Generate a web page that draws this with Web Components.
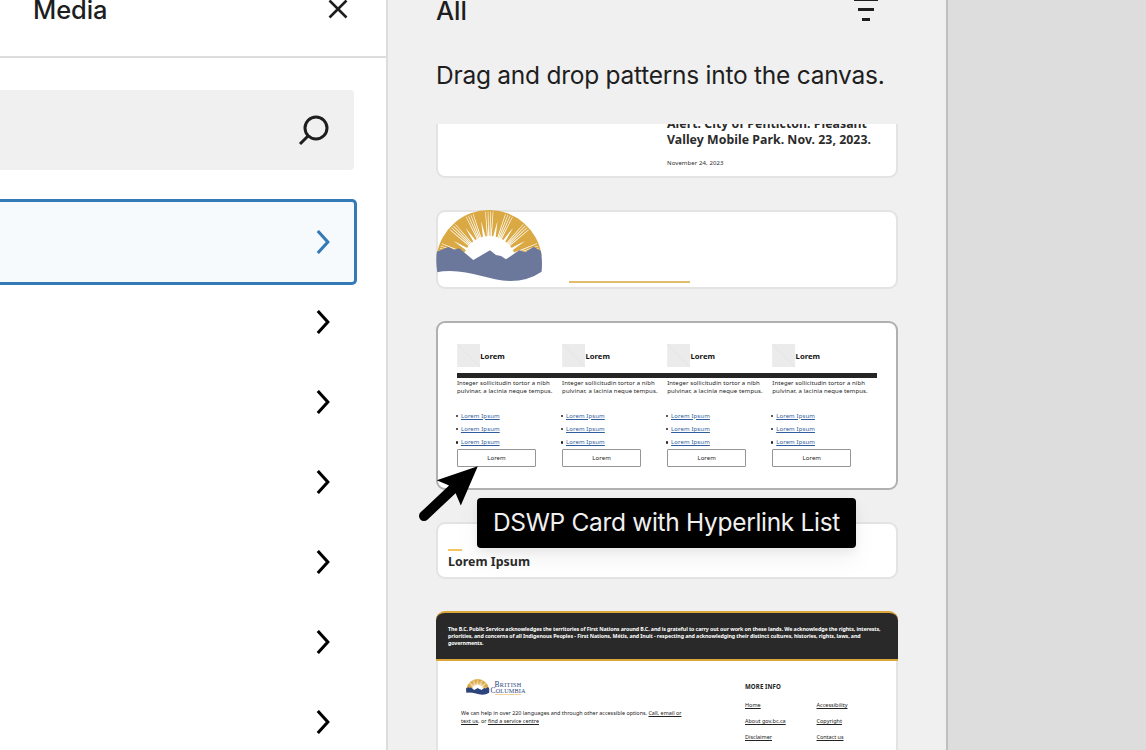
<!DOCTYPE html>
<html lang="en">
<head>
<meta charset="utf-8">
<title>Pattern inserter</title>
<style>
html, body { margin: 0; height: 100%; overflow: hidden; background: #fff; }
body { font-family: Inter, "Liberation Sans", sans-serif; color: #1e1e1e; }
</style>
</head>
<body>
<pattern-inserter></pattern-inserter>
<script>
const define = (name, html, setup) => {
  const template = document.createElement('template');
  template.innerHTML = html;
  customElements.define(name, class extends HTMLElement {
    connectedCallback() {
      if (this.shadowRoot) return;
      this.attachShadow({ mode: 'open' }).append(template.content.cloneNode(true));
      if (setup) setup(this, this.shadowRoot);
    }
  });
};

/* One line of text, tracked so that it fills the width "w". */
define('fit-line', `<style>
:host { display: block; white-space: nowrap; }
span { display: inline-block; vertical-align: top; }
</style><span><slot></slot></span>`, (host, root) => {
  const span = root.querySelector('span');
  const natural = span.getBoundingClientRect().width;
  const n = host.textContent.length;
  if (natural && n > 1) host.style.letterSpacing = ((+host.getAttribute('w') - natural) / n).toFixed(4) + 'px';
});

/* Sun over mountains emblem. */
define('sun-emblem', `<style>
:host { display: block; }
svg { display: block; width: 100%; height: 100%; overflow: visible; }
.hill { fill: var(--hill, #6b789b); }
</style>
<svg viewBox="0 0 107 72">
<path d="M.7 45.400A53 53 0 0 1 105.600 45.400L97 60H8Z" fill="#dba944"/>
<g class="rays" fill="#fff"></g>
<path d="M26.300 53A27 27 0 0 1 80.300 53Z" fill="#fff"/>
<path class="hill" d="M.9 41.700 12.300 37 18 39.700 23.300 38.300 37.300 50 54 40.300 60 45 65 46 70 49.300 83.300 40.300 89.300 42.300 97.700 36.700 104.900 41Q106.600 51 105.600 61.700 92 71 74 71C54 70.500 36 61 14 61Q6 61 1.300 62.300-.5 51 .9 41.700Z"/>
</svg>`, (host, root) => {
  const pt = (a, r) => {
    const t = a * Math.PI / 180;
    return (53.3 + r * Math.cos(t)).toFixed(2) + ' ' + (53 - r * Math.sin(t)).toFixed(2);
  };
  let d = '';
  const wedge = (a, half, r0, r1, tip) => {
    d += `M${pt(a - half, r0)}L${pt(a - tip, r1)}L${pt(a + tip, r1)}L${pt(a + half, r0)}Z`;
  };
  for (const a of [18, 44.5, 67.5, 90, 112.5, 135.5, 162])
    for (const o of [-4.2, -1.4, 1.4, 4.2]) wedge(a + o, 1.1, 26, 51.5, .3);
  for (const a of [31.5, 56, 79, 101, 124, 148.5]) wedge(a, 3, 26, 42, .1);
  const p = document.createElementNS('http://www.w3.org/2000/svg', 'path');
  p.setAttribute('d', d);
  root.querySelector('.rays').append(p);
});

define('category-row', `<style>
:host { display: flex; flex: none; box-sizing: border-box; height: 80px; align-items: center; justify-content: flex-end; padding-right: 56px; color: #000; }
:host([selected]) { height: 86px; margin-right: 29px; padding-right: 24px; border: 3px solid #347ab7; border-left: 0; border-radius: 0 5px 5px 0; background: #f6fafd; color: #347ab7; }
svg { display: block; width: 14px; height: 24px; }
</style>
<svg viewBox="0 0 14 24" fill="none" stroke="currentColor" stroke-width="3.100"><path d="M1.800 1 11.800 12 1.800 23"/></svg>`);

define('category-panel', `<style>
:host { display: flex; flex-direction: column; box-sizing: border-box; width: 388px; height: 750px; border-right: 2px solid #ddd; background: #fff; }
header { display: flex; flex: none; justify-content: space-between; height: 56px; padding: 0 38px 0 33px; border-bottom: 2px solid #ddd; }
header fit-line { font: 500 25.500px/20px Inter, sans-serif; }
header svg { width: 20px; height: 20px; margin-top: -1px; }
.search { display: flex; flex: none; align-items: center; justify-content: flex-end; height: 80px; box-sizing: border-box; margin: 32px 32px 29px 0; padding-right: 24px; border-radius: 0 4px 4px 0; background: #f0f0f0; }
.search svg { width: 32px; height: 32px; }
.rows { display: flex; flex-direction: column; }
category-row[selected] { margin-bottom: -3px; }
</style>
<header><fit-line w="74.500">Media</fit-line>
<svg viewBox="0 0 20 20" stroke="#1e1e1e" stroke-width="2.600"><path d="M1.500 1.500 18.500 18.500M18.500 1.500 1.500 18.500"/></svg></header>
<div class="search"><svg viewBox="0 0 32 32" fill="none" stroke="#1e1e1e" stroke-width="3"><circle cx="18" cy="14" r="11"/><path d="M10.500 21.500 2 30"/></svg></div>
<div class="rows"><category-row selected></category-row><category-row></category-row><category-row></category-row><category-row></category-row><category-row></category-row><category-row></category-row><category-row></category-row></div>`);

define('pattern-card', `<style>
:host { display: flex; flex-direction: column; box-sizing: border-box; width: 462px; flex: none; border: 2px solid #e3e3e3; border-radius: 9px; background: #fff; font-family: "Noto Sans", sans-serif; color: #2b2b2b; }
</style><slot></slot>`);

define('link-card', `<style>
:host { display: flex; flex-direction: column; width: 105.100px; font: 6px/8px "Noto Sans", sans-serif; color: #222; }
.head { display: flex; align-items: center; height: 23px; margin-bottom: 6px; }
.head svg { width: 23.300px; height: 23px; }
.head fit-line { font: 700 7.700px/10px "Noto Sans", sans-serif; color: #111; }
.bar { height: 5px; background: #252525; }
.copy { margin-top: 1px; height: 30px; }
ul { list-style: none; margin: 0; padding: 0; }
li { display: flex; align-items: center; height: 13.400px; margin-left: -1.500px; }
li::before { content: ""; width: 2.400px; height: 2.400px; margin-right: 3px; border-radius: 50%; background: #222; }
a { color: #2f5c9c; text-decoration: underline; text-decoration-thickness: .6px; text-underline-offset: 1px; }
.button { display: flex; align-items: center; justify-content: center; box-sizing: border-box; width: 79px; height: 18px; border: 1px solid #959595; border-radius: 1px; margin-top: -.2px; }
</style>
<div class="head"><svg viewBox="0 0 23 23"><path d="M0 0H23V23H0Z" fill="#ebebeb"/><path d="M0 0 23 23" stroke="#dedede" stroke-width=".5"/></svg><fit-line w="24.500">Lorem</fit-line></div>
<div class="bar"></div>
<div class="copy"><fit-line w="92.700">Integer sollicitudin tortor a nibh</fit-line><fit-line w="95.500">pulvinar, a lacinia neque tempus.</fit-line></div>
<ul><li><fit-line w="38.800"><a>Lorem Ipsum</a></fit-line></li><li><fit-line w="38.800"><a>Lorem Ipsum</a></fit-line></li><li><fit-line w="38.800"><a>Lorem Ipsum</a></fit-line></li></ul>
<div class="button"><fit-line w="18.500">Lorem</fit-line></div>`);

define('site-footer', `<style>
:host { display: flex; flex-direction: column; margin: -2px -2px 0; }
.ack { box-sizing: border-box; height: 50px; padding: 12.500px 12px 0; border-top: 2px solid #dba63a; border-bottom: 2px solid #dba63a; border-radius: 9px 9px 0 0; background: #292929; color: #fff; font: 700 5.300px/7px "Noto Sans", sans-serif; }
.body { display: flex; padding: 17px 0 0 25px; font: 5.400px/8px "Noto Sans", sans-serif; color: #222; }
.left { width: 284px; }
.brand { display: flex; height: 18px; padding-left: 5px; margin-bottom: 13px; }
sun-emblem { width: 23.500px; height: 16px; margin-top: 1px; --hill: #2c447c; }
.name { display: flex; flex-direction: column; align-items: center; margin-left: 1px; color: #2c447c; font: 7.600px/6px "Liberation Serif", serif; padding-top: 3.500px; }
.name small { font-size: 6.200px; }
.name i { width: 26px; height: 1px; background: #f0d49b; }
u { text-decoration-thickness: .6px; text-underline-offset: 1px; }
.more { padding-top: 5px; }
h4 { margin: 0 0 10px; font: 700 6.100px/8px "Noto Sans", sans-serif; }
.links { display: grid; grid-template-columns: 71.500px auto; row-gap: 8px; font-size: 5.500px; }
</style>
<div class="ack"><fit-line w="432.500">The B.C. Public Service acknowledges the territories of First Nations around B.C. and is grateful to carry out our work on these lands. We acknowledge the rights, interests,</fit-line><fit-line w="412.500">priorities, and concerns of all Indigenous Peoples - First Nations, Métis, and Inuit - respecting and acknowledging their distinct cultures, histories, rights, laws, and</fit-line><fit-line w="35.500">governments.</fit-line></div>
<div class="body"><div class="left"><div class="brand"><sun-emblem></sun-emblem><div class="name"><fit-line w="27">B<small>RITISH</small></fit-line><fit-line w="35">C<small>OLUMBIA</small></fit-line><i></i></div></div>
<fit-line w="220.500">We can help in over 220 languages and through other accessible options. <u>Call, email or</u></fit-line><fit-line w="78"><u>text us</u>, or <u>find a service centre</u></fit-line></div>
<div class="more"><h4><fit-line w="36">MORE INFO</fit-line></h4><div class="links"><fit-line w="15.700"><u>Home</u></fit-line><fit-line w="31"><u>Accessibility</u></fit-line><fit-line w="40.700"><u>About gov.bc.ca</u></fit-line><fit-line w="25.500"><u>Copyright</u></fit-line><fit-line w="27"><u>Disclaimer</u></fit-line><fit-line w="27"><u>Contact us</u></fit-line></div></div></div>`);

define('pattern-panel', `<style>
:host { display: flex; flex-direction: column; box-sizing: border-box; width: 560px; height: 750px; padding-left: 48px; border-right: 2px solid #bfbfbf; background: #f0f0f0; }
header { display: flex; justify-content: space-between; height: 64px; padding-right: 68px; }
header fit-line { font: 500 25.500px/21px Inter, sans-serif; }
header svg { width: 24px; height: 22px; }
.hint { font: 24.500px/22px Inter, sans-serif; height: 60px; }
.list { display: flex; flex-direction: column; flex: 1; min-height: 0; overflow: hidden; gap: 32px; }
.post { height: 54px; border-top: 0; border-radius: 0 0 9px 9px; }
.post div { margin: -8px 0 0 229px; font: 700 12.300px/16px "Noto Sans", sans-serif; }
.post .date { margin-top: 11px; font: 400 6px/8px "Noto Sans", sans-serif; }
.logo { height: 79px; flex-direction: row; align-items: flex-start; }
.logo sun-emblem { width: 107px; height: 72px; margin: -2px 0 0 -2px; }
.logo i { width: 121px; height: 2px; margin: 68.500px 0 0 26px; background: #e3bd6e; }
.cards { height: 169px; border-color: #b0b0b0; padding: 21px 0 0 19px; }
.cards div { display: flex; }
.head { height: 57px; padding: 25px 0 0 10px; box-sizing: border-box; }
.head i { width: 14px; height: 2px; background: #f5c564; }
.head fit-line { margin-top: 3px; font: 700 12.400px/16px "Noto Sans", sans-serif; }
.foot { height: 180px; }
</style>
<header><fit-line w="31">All</fit-line><svg viewBox="0 0 24 22" fill="#1e1e1e"><path d="M0-2H24V1H0ZM4 8H20V11H4ZM8 18H16V21H8Z"/></svg></header>
<fit-line class="hint" w="448.500">Drag and drop patterns into the canvas.</fit-line>
<div class="list">
<pattern-card class="post"><div><fit-line w="200">Alert: City of Penticton: Pleasant</fit-line><fit-line w="204">Valley Mobile Park. Nov. 23, 2023.</fit-line></div><div class="date"><fit-line w="56.500">November 24, 2023</fit-line></div></pattern-card>
<pattern-card class="logo"><sun-emblem></sun-emblem><i></i></pattern-card>
<pattern-card class="cards"><div><link-card></link-card><link-card></link-card><link-card></link-card><link-card></link-card></div></pattern-card>
<pattern-card class="head"><i></i><fit-line w="82">Lorem Ipsum</fit-line></pattern-card>
<pattern-card class="foot"><site-footer></site-footer></pattern-card>
</div>`);

define('hover-tip', `<style>
:host { position: absolute; left: 477px; top: 498px; display: block; box-sizing: border-box; width: 379px; height: 50px; padding: 14px 16px; border-radius: 4px; background: #000; color: #f0f0f0; font: 24.500px/21px Inter, sans-serif; box-shadow: 0 4px 8px rgba(0,0,0,.06), 0 12px 24px rgba(0,0,0,.05); }
</style><slot></slot>`);

define('pointer-arrow', `<style>
:host { position: absolute; left: 414px; top: 462px; display: block; width: 70px; height: 62px; }
svg { display: block; }
</style><svg width="70" height="62" viewBox="414 462 70 62"><path d="M477.800 466.200 436.700 480.200 448.500 485.300 L455.500 493 460.800 505.500Z"/><path d="M424 516 457 485" stroke="#000" stroke-width="10" stroke-linecap="round"/></svg>`);

define('pattern-inserter', `<style>
:host { position: relative; display: flex; width: 1146px; height: 750px; overflow: hidden; background: #ddd; }
</style>
<category-panel></category-panel><pattern-panel></pattern-panel>
<pointer-arrow></pointer-arrow>
<hover-tip><fit-line w="347">DSWP Card with Hyperlink List</fit-line></hover-tip>`);
</script>
</body>
</html>
